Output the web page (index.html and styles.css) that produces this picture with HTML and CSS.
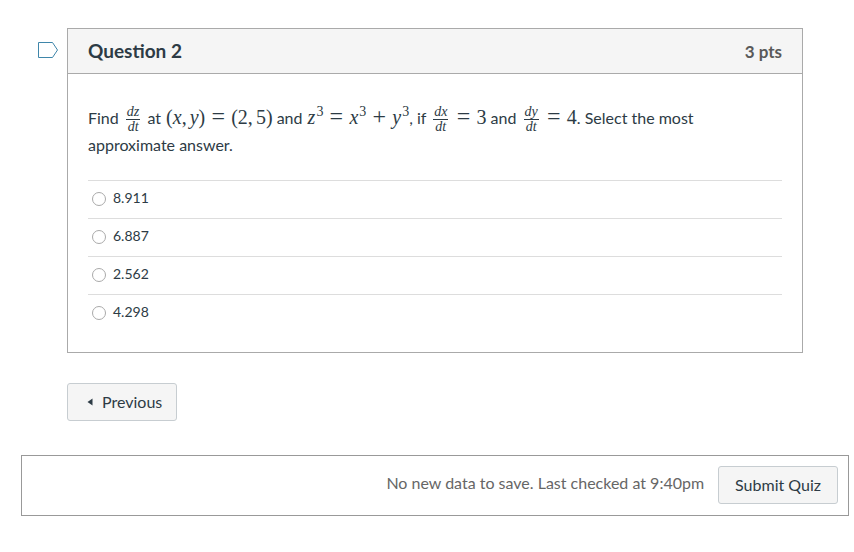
FILE: index.html
```html
<!DOCTYPE html>
<html lang="en">
<head>
    <meta charset="UTF-8">
    <meta name="viewport" content="width=device-width, initial-scale=1.0">
    <title>Quiz: Question 2</title>
    <link rel="stylesheet" href="styles.css">
</head>
<body>
    <form class="quiz-form">
        <div class="question-row">
            <button type="button" class="flag-question" aria-label="Flag question">
                <svg width="21" height="17" viewBox="0 0 21 17" fill="none" stroke="#3f86aa">
                    <path d="M.5 .5h14l5 7.500-5 7.500H.5z"/>
                </svg>
            </button>

            <section class="question">
                <header class="question-header">
                    <h2 class="question-name">Question 2</h2>
                    <span class="question-points">3 pts</span>
                </header>

                <div class="question-body">
                    <p class="question-text">
                        Find
                        <span class="frac"><i class="num">dz</i><i class="den">dt</i></span>
                        at
                        <span class="math"><span>(<i>x</i>,<i class="after-comma">y</i>)</span><span class="rel">=</span><span>(2,<span class="after-comma">5</span>)</span></span>
                        and
                        <span class="math"><span><i>z</i><sup>3</sup></span><span class="rel">=</span><span><i>x</i><sup>3</sup></span><span class="rel">+</span><span><i>y</i><sup>3</sup></span></span>, if
                        <span class="frac"><i class="num">dx</i><i class="den">dt</i></span>
                        <span class="math"><span class="rel">=</span><span>3</span></span>
                        and
                        <span class="frac"><i class="num">dy</i><i class="den">dt</i></span>
                        <span class="math"><span class="rel">=</span><span>4</span></span>. Select the most<br>
                        approximate answer.
                    </p>

                    <div class="answers" role="radiogroup" aria-label="Answers">
                        <label class="answer"><input type="radio" name="answer" value="8.911"><span>8.911</span></label>
                        <label class="answer"><input type="radio" name="answer" value="6.887"><span>6.887</span></label>
                        <label class="answer"><input type="radio" name="answer" value="2.562"><span>2.562</span></label>
                        <label class="answer"><input type="radio" name="answer" value="4.298"><span>4.298</span></label>
                    </div>
                </div>
            </section>
        </div>

        <div class="question-nav">
            <button type="button" class="btn previous">
                <svg width="6" height="8" viewBox="0 0 6 8" fill="#2d3b45"><path d="M5.500 .5v7L.5 4z"/></svg>
                Previous
            </button>
        </div>

        <footer class="submit-bar">
            <span class="save-status">No new data to save. Last checked at 9:40pm</span>
            <button type="submit" class="btn">Submit Quiz</button>
        </footer>
    </form>
</body>
</html>
```

FILE: styles.css
```css
* {
    box-sizing: border-box;
}

body {
    margin: 0;
    background: #fff;
    color: #2d3b45;
    font-family: Lato, "Open Sans", sans-serif;
    font-size: 16px;
    line-height: 24px;
}

.quiz-form {
    padding: 28px 5px 36px 21px;
}

/* Question box */
.question-row {
    display: flex;
    align-items: flex-start;
    padding: 0 46px 0 17px;
}

.flag-question {
    flex: none;
    width: 29px;
    margin-top: 14px;
    padding: 0;
    border: none;
    background: none;
    text-align: left;
    cursor: pointer;
}

.flag-question svg {
    display: block;
}

.question {
    flex: 1;
    border: 1px solid #aaa;
}

.question-header {
    display: flex;
    justify-content: space-between;
    align-items: baseline;
    padding: 10px 20px 9px;
    border-bottom: 1px solid #aaa;
    background: #f5f5f5;
}

.question-name {
    margin: 0;
    font-size: 19px;
    font-weight: bold;
}

.question-points {
    color: #595959;
    font-size: 17px;
    font-weight: bold;
}

.question-body {
    padding: 30px 20px 20px;
}

.question-text {
    margin: 0 0 22px;
    line-height: 26px;
}

/* Formulas */
.math,
.frac {
    font-family: "Liberation Serif", "Times New Roman", serif;
}

.math {
    display: inline-flex;
    align-items: baseline;
    gap: 6px;
    margin-left: 1px;
    font-size: 20px;
    line-height: 24px;
}

.math sup {
    margin-left: 1px;
    font-size: 14px;
    line-height: 0;
    vertical-align: 8px;
}

.rel {
    width: 14px;
    font-size: 24px;
    text-align: center;
}

.after-comma {
    margin-left: 3px;
}

.frac {
    display: inline-flex;
    flex-direction: column;
    margin: -2px 3px;
    font-size: 14px;
    line-height: 14px;
    text-align: center;
    vertical-align: middle;
}

.num {
    padding: 0 1px;
    border-bottom: 1px solid #2d3b45;
}

/* Answers */
.answer {
    display: flex;
    align-items: flex-start;
    gap: 7px;
    height: 38px;
    padding: 7px 0 0 4px;
    border-top: 1px solid #ddd;
    font-size: 14px;
    line-height: 20px;
}

.answer input {
    appearance: none;
    width: 14px;
    height: 14px;
    margin: 4px 0 0;
    border: 1px solid #aaa;
    border-radius: 50%;
    background: #fff;
}

.answer input:checked {
    border: 4px solid #0374b5;
}

/* Buttons */
.btn {
    padding: 6px 16px;
    border: 1px solid #c7cdd1;
    border-radius: 3px;
    background: #f5f5f5;
    color: #2d3b45;
    font: inherit;
    cursor: pointer;
}

.question-nav {
    padding: 30px 46px 34px;
}

.previous {
    display: flex;
    align-items: center;
    gap: 9px;
    padding: 6px 14px 6px 19px;
}

.submit-bar {
    display: flex;
    justify-content: flex-end;
    align-items: center;
    gap: 14px;
    padding: 10px 10px 11px;
    border: 1px solid #999;
}

.save-status {
    padding-bottom: 4px;
    color: #666;
}
```
